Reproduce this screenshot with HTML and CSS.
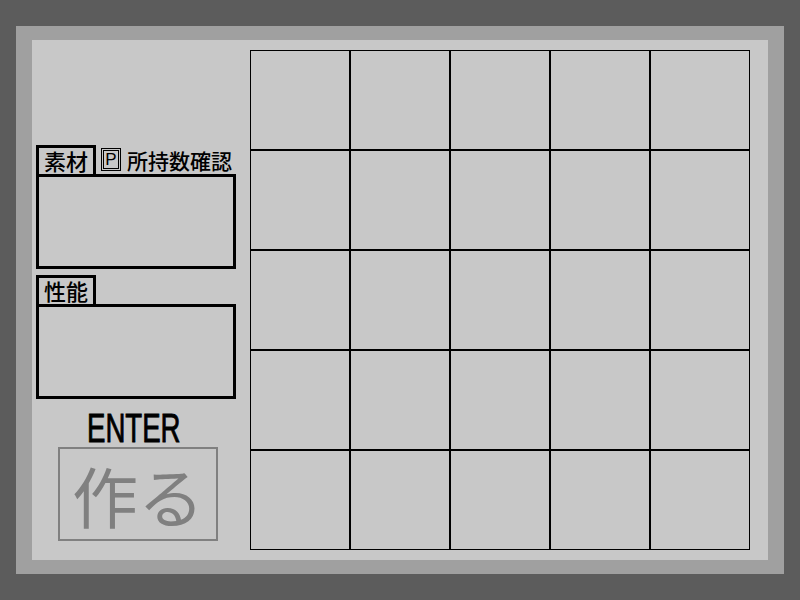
FILE: index.html
```html
<!DOCTYPE html>
<html lang="ja">
<head>
<meta charset="utf-8">
<title>作る</title>
<link rel="stylesheet" href="styles.css">
</head>
<body>
<div class="screen">
  <div class="band">
    <div class="panel">
      <div class="side">
        <div class="tabrow">
          <div class="tab">素材</div>
          <div class="pkey">P</div>
          <div class="hint">所持数確認</div>
        </div>
        <div class="box"></div>
        <div class="tabrow tabrow-second">
          <div class="tab">性能</div>
        </div>
        <div class="box"></div>
        <div class="enter"><span class="enter-text">ENTER</span></div>
        <div class="make">作る</div>
      </div>
      <div class="grid">
        <div class="cell"></div><div class="cell"></div><div class="cell"></div><div class="cell"></div><div class="cell"></div>
        <div class="cell"></div><div class="cell"></div><div class="cell"></div><div class="cell"></div><div class="cell"></div>
        <div class="cell"></div><div class="cell"></div><div class="cell"></div><div class="cell"></div><div class="cell"></div>
        <div class="cell"></div><div class="cell"></div><div class="cell"></div><div class="cell"></div><div class="cell"></div>
        <div class="cell"></div><div class="cell"></div><div class="cell"></div><div class="cell"></div><div class="cell"></div>
      </div>
    </div>
  </div>
</div>
</body>
</html>
```

FILE: styles.css
```css
html, body {
  margin: 0;
  padding: 0;
  background: #5c5c5c;
}

.screen {
  width: 800px;
  height: 600px;
  box-sizing: border-box;
  padding: 26px 16px;
  background: #5c5c5c;
  font-family: "Noto Sans CJK JP", "Liberation Sans", sans-serif;
  color: #000;
}

.band {
  height: 548px;
  box-sizing: border-box;
  padding: 14px 16px;
  background: #a0a0a0;
}

.panel {
  height: 520px;
  box-sizing: border-box;
  padding: 10px 18px 10px 4px;
  background: #c8c8c8;
  display: flex;
  align-items: flex-start;
  gap: 14px;
}

.side {
  width: 200px;
  margin-top: 95px;
  display: flex;
  flex-direction: column;
}

.tabrow {
  display: flex;
  align-items: center;
  height: 29px;
}

.tabrow-second {
  margin-top: 6px;
}

.tab {
  width: 60px;
  height: 29px;
  box-sizing: border-box;
  border: 3px solid #000;
  border-bottom: 0;
  font-size: 22px;
  font-weight: 500;
  line-height: 24px;
  padding-bottom: 2px;
  text-align: center;
  letter-spacing: 0;
  white-space: nowrap;
  align-self: flex-end;
}

.pkey {
  width: 20px;
  height: 23px;
  box-sizing: border-box;
  margin-left: 5px;
  border: 3px double #000;
  font-family: "Liberation Sans", sans-serif;
  font-size: 17px;
  line-height: 17px;
  text-align: center;
}

.hint {
  margin-left: 6px;
  font-size: 21px;
  font-weight: 500;
  line-height: 24px;
  white-space: nowrap;
}

.box {
  height: 95px;
  box-sizing: border-box;
  border: 3px solid #000;
}

.enter {
  margin-top: 10px;
  height: 38px;
  line-height: 38px;
  text-align: center;
  font-family: "Liberation Sans", sans-serif;
  font-size: 40px;
}

.enter-text {
  display: inline-block;
  transform: scaleX(0.69);
  transform-origin: center;
  margin-left: -4px;
  -webkit-text-stroke: 0.9px #000;
}

.make {
  margin-left: 22px;
  width: 160px;
  height: 94px;
  box-sizing: border-box;
  border: 2px solid #808080;
  color: #808080;
  font-size: 66px;
  line-height: 1;
  display: flex;
  align-items: center;
  justify-content: center;
}

.grid {
  display: grid;
  grid-template-columns: repeat(5, 100px);
  grid-auto-rows: 100px;
}

.cell {
  box-sizing: border-box;
  border: 1px solid #000;
}
```
